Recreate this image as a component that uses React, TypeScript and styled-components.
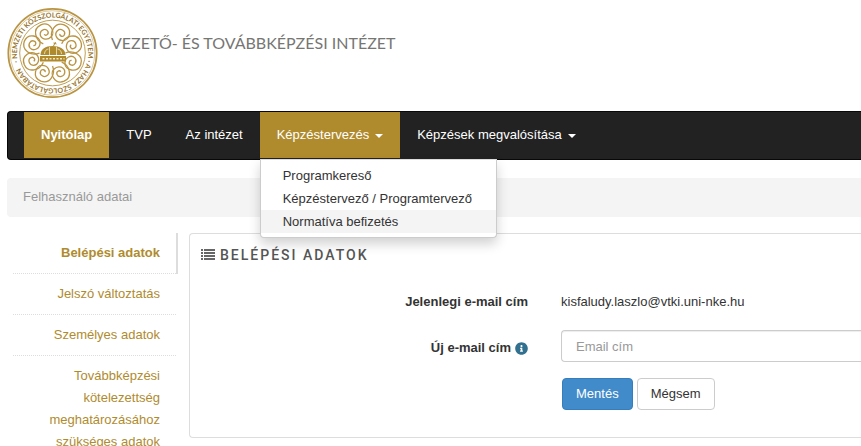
import React from "react";
import styled, { createGlobalStyle, css } from "styled-components";
import { FaInfoCircle } from "react-icons/fa";

const gold = "#b08b2e";

const GlobalStyle = createGlobalStyle`
  * { box-sizing: border-box; }
  html { overflow-x: hidden; scrollbar-width: none; }
  body {
    margin: 0;
    background: #fff;
    color: #333;
    font: 13px/20px "Liberation Sans", Arial, sans-serif;
  }
`;

const Page = styled.div`
  padding-left: 7px;
`;

const Header = styled.header`
  display: flex;
  align-items: flex-start;
  gap: 13px;
  padding: 7px 0 12px;
`;

const LogoSvg = styled.svg`
  width: 91px;
  height: 92px;
  flex: none;
`;

const SiteTitle = styled.h1`
  margin: 23px 0 0;
  font: 400 16px/26px Lato, sans-serif;
  color: #767673;
  white-space: nowrap;
`;

const Navbar = styled.nav`
  border: 1px solid #080808;
  border-right: 0;
  border-radius: 4px 0 0 4px;
  background: #222;
  padding: 0 0 1px 16px;
`;

const NavList = styled.ul`
  display: flex;
  list-style: none;
  margin: 0;
  padding: 0;
`;

const NavItem = styled.li`
  position: relative;
`;

const NavLink = styled.a<{ $active?: boolean; $bold?: boolean }>`
  display: flex;
  align-items: center;
  gap: 6px;
  height: 46px;
  padding: 0 17px;
  color: #fff;
  text-decoration: none;
  white-space: nowrap;
  font-weight: ${(p) => (p.$bold ? 700 : 400)};
  background: ${(p) => (p.$active ? gold : "transparent")};
`;

const Caret = styled.span`
  border: 4px solid transparent;
  border-top-color: #fff;
  border-bottom: 0;
  margin-top: 2px;
`;

const Dropdown = styled.ul`
  position: absolute;
  z-index: 2;
  top: 100%;
  left: 0;
  min-width: 237px;
  margin: 1px 0 0;
  padding: 4px 0;
  list-style: none;
  background: #fff;
  border: 1px solid #ccc;
  border-top-color: #ddd;
  border-radius: 0 0 4px 4px;
  box-shadow: 0 6px 12px rgba(0, 0, 0, 0.18);
`;

const DropdownLink = styled.a<{ $hover?: boolean }>`
  display: block;
  padding: 0 22px;
  line-height: 23px;
  color: #333;
  text-decoration: none;
  white-space: nowrap;
  background: ${(p) => (p.$hover ? "#f4f4f4" : "transparent")};
`;

const Breadcrumb = styled.div`
  margin: 18px 0 16px;
  padding: 9px 16px 10px;
  border-radius: 4px 0 0 4px;
  background: #f4f4f4;
  color: #999;
`;

const Columns = styled.div`
  display: grid;
  grid-template-columns: 171px 1fr;
  gap: 11px;
  align-items: start;
`;

const SideMenu = styled.ul`
  list-style: none;
  margin: 0;
  padding: 0 2px 0 6px;
`;

const SideItem = styled.li<{ $active?: boolean }>`
  position: relative;
  border-bottom: 1px dotted #ddd;
  ${(p) =>
    p.$active &&
    css`
      &::after {
        content: "";
        position: absolute;
        top: 0;
        bottom: -1px;
        left: 100%;
        width: 2px;
        background: #ddd;
      }
    `}
`;

const SideLink = styled.a<{ $active?: boolean }>`
  display: block;
  padding: 9px 16px 9px 28px;
  line-height: 22px;
  text-align: right;
  text-decoration: none;
  color: ${gold};
  font-weight: ${(p) => (p.$active ? 700 : 400)};
`;

const Panel = styled.section`
  min-width: 0;
  border: 1px solid #ddd;
  border-right: 0;
  border-radius: 4px 0 0 4px;
  padding: 11px 0 27px 11px;
`;

const PanelTitle = styled.h2`
  display: flex;
  align-items: center;
  gap: 5px;
  margin: 0 0 27px;
  font: 500 14px/20px Roboto, sans-serif;
  letter-spacing: 2px;
  color: #555;
`;

const ListSvg = styled.svg`
  width: 14px;
  height: 12px;
`;

const FormRow = styled.div`
  display: grid;
  grid-template-columns: 327px 1fr;
  column-gap: 33px;
  align-items: start;
  margin-bottom: 16px;
`;

const Label = styled.label<{ $forInput?: boolean }>`
  display: flex;
  justify-content: flex-end;
  align-items: center;
  gap: 4px;
  padding-top: ${(p) => (p.$forInput ? 8 : 0)}px;
  font-weight: 700;

  svg {
    color: #31708f;
    font-size: 13px;
  }
`;

const Value = styled.output`
  padding-bottom: 2px;
`;

const TextInput = styled.input`
  width: 100%;
  height: 32px;
  padding: 0 14px;
  border: 1px solid #ccc;
  border-right: 0;
  border-radius: 4px 0 0 4px;
  box-shadow: inset 0 1px 1px rgba(0, 0, 0, 0.075);
  font: inherit;
  color: #555;

  &::placeholder {
    color: #999;
    opacity: 1;
  }
`;

const Actions = styled.div`
  display: flex;
  gap: 4px;
  padding-left: 361px;
`;

const Button = styled.button<{ $primary?: boolean }>`
  height: 32px;
  padding: 0 13px;
  border: 1px solid ${(p) => (p.$primary ? "#357ebd" : "#ccc")};
  border-radius: 4px;
  background: ${(p) => (p.$primary ? "#428bca" : "#fff")};
  color: ${(p) => (p.$primary ? "#fff" : "#333")};
  font: inherit;
`;

const lobes = Array.from({ length: 8 }, (_, i) => i * 45 + 22.5);

function Logo() {
  return (
    <LogoSvg viewBox="-45.5 -46 91 92" role="img" aria-label="Nemzeti Közszolgálati Egyetem">
      <defs>
        <path id="seal-ring" d="M0 -35.5A35.5 35.5 0 1 1 -.1 -35.5" />
      </defs>
      <g fill="none" stroke="#b99443">
        <circle r="44.2" strokeWidth="1.7" />
        <circle r="42.3" strokeWidth=".5" />
        <circle r="32.8" strokeWidth=".9" />
        {lobes.map((a) => (
          <path
            key={a}
            transform={`rotate(${a})`}
            strokeWidth="1.3"
            d="M-5 -12C-11 -18 -10 -30 0 -30.5C10 -30.5 11 -18 5 -15.5C-1 -13 -6 -18 -4 -22.5C-2 -26.5 4 -25.5 4 -21.5C4 -18.5 0 -18 -.5 -20.5"
          />
        ))}
      </g>
      <text transform="rotate(-105)" fill="#98752b" fontFamily="Lato, sans-serif" fontWeight="700" fontSize="7">
        <textPath href="#seal-ring">
          · NEMZETI KÖZSZOLGÁLATI EGYETEM · A HAZA SZOLGÁLATÁBAN
        </textPath>
      </text>
      <g fill="#b08b2e">
        <path d="M-12 2C-12 -4 -7 -7 0 -7C7 -7 13 -4 13 2Z" />
        <path d="M-12.500 3H13.500V8.500H-12.500Z" />
        <path d="M1 -7L3 -11M1 -10L4 -9" stroke="#b08b2e" strokeWidth="1" />
      </g>
      <g fill="none" stroke="#f3e7c4" strokeWidth=".8">
        <path d="M-3 2V-6M4 2V-6M-8 1C-8 -2 -6 -4 -4 -4M9 1C9 -2 7 -4 5 -4" />
        <path d="M-10 5.800H12" strokeDasharray="2 1.500" strokeWidth="1.500" />
      </g>
    </LogoSvg>
  );
}

function ListIcon() {
  return (
    <ListSvg viewBox="0 0 14 12" fill="#666" shapeRendering="crispEdges" aria-hidden="true">
      {[0, 3, 6, 9].map((y) => (
        <React.Fragment key={y}>
          <rect x="0" y={y} width="2" height="2" />
          <rect x="3" y={y} width="11" height="2" />
        </React.Fragment>
      ))}
    </ListSvg>
  );
}

const sideLinks = [
  "Belépési adatok",
  "Jelszó változtatás",
  "Személyes adatok",
  "Továbbképzési kötelezettség meghatározásához szükséges adatok",
];

export default function App() {
  return (
    <>
      <GlobalStyle />
      <Page>
        <Header>
          <Logo />
          <SiteTitle>VEZETŐ- ÉS TOVÁBBKÉPZÉSI INTÉZET</SiteTitle>
        </Header>
        <Navbar>
          <NavList>
            <NavItem><NavLink href="#" $active $bold>Nyitólap</NavLink></NavItem>
            <NavItem><NavLink href="#">TVP</NavLink></NavItem>
            <NavItem><NavLink href="#">Az intézet</NavLink></NavItem>
            <NavItem>
              <NavLink href="#" $active>Képzéstervezés<Caret /></NavLink>
              <Dropdown>
                <li><DropdownLink href="#">Programkereső</DropdownLink></li>
                <li><DropdownLink href="#">Képzéstervező / Programtervező</DropdownLink></li>
                <li><DropdownLink href="#" $hover>Normatíva befizetés</DropdownLink></li>
              </Dropdown>
            </NavItem>
            <NavItem><NavLink href="#">Képzések megvalósítása<Caret /></NavLink></NavItem>
          </NavList>
        </Navbar>
        <Breadcrumb>Felhasználó adatai</Breadcrumb>
        <Columns>
          <SideMenu>
            {sideLinks.map((text, i) => (
              <SideItem key={text} $active={i === 0}>
                <SideLink href="#" $active={i === 0}>{text}</SideLink>
              </SideItem>
            ))}
          </SideMenu>
          <Panel>
            <PanelTitle><ListIcon />BELÉPÉSI ADATOK</PanelTitle>
            <FormRow>
              <Label htmlFor="current-email">Jelenlegi e-mail cím</Label>
              <Value id="current-email">kisfaludy.laszlo@vtki.uni-nke.hu</Value>
            </FormRow>
            <FormRow>
              <Label htmlFor="new-email" $forInput>Új e-mail cím <FaInfoCircle /></Label>
              <TextInput id="new-email" type="email" placeholder="Email cím" />
            </FormRow>
            <Actions>
              <Button type="button" $primary>Mentés</Button>
              <Button type="button">Mégsem</Button>
            </Actions>
          </Panel>
        </Columns>
      </Page>
    </>
  );
}
